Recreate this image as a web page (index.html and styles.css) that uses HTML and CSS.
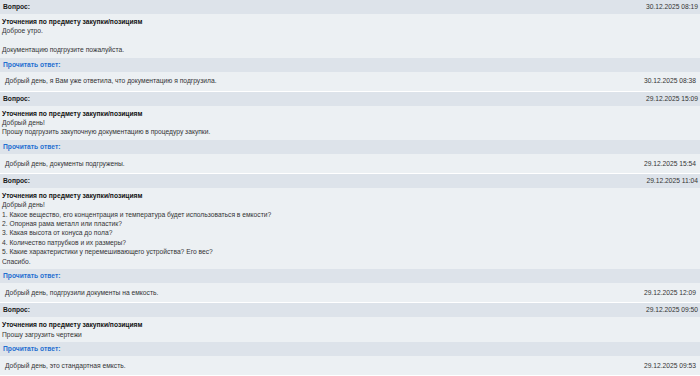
FILE: index.html
```html
<!DOCTYPE html>
<html lang="ru">
<head>
    <meta charset="UTF-8">
    <title>Вопросы по закупке</title>
    <link rel="stylesheet" href="styles.css">
</head>
<body>
    <div class="qa-list">
        <div class="qa">
            <div class="q-head">
                <span class="label">Вопрос:</span>
                <span class="date">30.12.2025 08:19</span>
            </div>
            <div class="q-body">
                <div class="subject">Уточнения по предмету закупки/позициям</div>
                <div>Доброе утро.</div>
                <div><br></div>
                <div>Документацию подгрузите пожалуйста.</div>
            </div>
            <div class="a-head">Прочитать ответ:</div>
            <div class="a-row">
                <span>Добрый день, я Вам уже ответила, что документацию я подгрузила.</span>
                <span class="date">30.12.2025 08:38</span>
            </div>
        </div>

        <div class="qa">
            <div class="q-head">
                <span class="label">Вопрос:</span>
                <span class="date">29.12.2025 15:09</span>
            </div>
            <div class="q-body">
                <div class="subject">Уточнения по предмету закупки/позициям</div>
                <div>Добрый день!</div>
                <div>Прошу подгрузить закупочную документацию в процедуру закупки.</div>
            </div>
            <div class="a-head">Прочитать ответ:</div>
            <div class="a-row">
                <span>Добрый день, документы подгружены.</span>
                <span class="date">29.12.2025 15:54</span>
            </div>
        </div>

        <div class="qa">
            <div class="q-head">
                <span class="label">Вопрос:</span>
                <span class="date">29.12.2025 11:04</span>
            </div>
            <div class="q-body">
                <div class="subject">Уточнения по предмету закупки/позициям</div>
                <div>Добрый день!</div>
                <div>1. Какое вещество, его концентрация и температура будет использоваться в емкости?</div>
                <div>2. Опорная рама металл или пластик?</div>
                <div>3. Какая высота от конуса до пола?</div>
                <div>4. Количество патрубков и их размеры?</div>
                <div>5. Какие характеристики у перемешивающего устройства? Его вес?</div>
                <div>Спасибо.</div>
            </div>
            <div class="a-head">Прочитать ответ:</div>
            <div class="a-row">
                <span>Добрый день, подгрузили документы на емкость.</span>
                <span class="date">29.12.2025 12:09</span>
            </div>
        </div>

        <div class="qa">
            <div class="q-head">
                <span class="label">Вопрос:</span>
                <span class="date">29.12.2025 09:50</span>
            </div>
            <div class="q-body">
                <div class="subject">Уточнения по предмету закупки/позициям</div>
                <div>Прошу загрузить чертежи</div>
            </div>
            <div class="a-head">Прочитать ответ:</div>
            <div class="a-row">
                <span>Добрый день, это стандартная емксть.</span>
                <span class="date">29.12.2025 09:53</span>
            </div>
        </div>
    </div>
</body>
</html>
```

FILE: styles.css
```css
body {
    margin: 0;
    background: #ffffff;
    font-family: "Liberation Sans", Arial, sans-serif;
    font-size: 6.7px;
    line-height: 9.4px;
    color: #333333;
}

.qa {
    margin-bottom: 1px;
}

.q-head {
    display: flex;
    justify-content: space-between;
    align-items: center;
    height: 14px;
    padding: 0 2px 0 3px;
    background: #dde3ea;
}

.q-head .label {
    font-weight: bold;
    color: #1a1a1a;
}

.q-body {
    padding: 3px 3px 3px 2px;
    background: #ecf0f3;
}

.subject {
    font-weight: bold;
    color: #111111;
}

.a-head {
    display: flex;
    align-items: center;
    height: 14px;
    padding: 0 3px;
    background: #dde3ea;
    font-weight: bold;
    color: #1f6fd1;
}

.a-row {
    display: flex;
    justify-content: space-between;
    align-items: center;
    height: 19px;
    padding: 0 4px 0 5px;
    background: #ecf0f3;
}

.date {
    color: #333333;
}
```
